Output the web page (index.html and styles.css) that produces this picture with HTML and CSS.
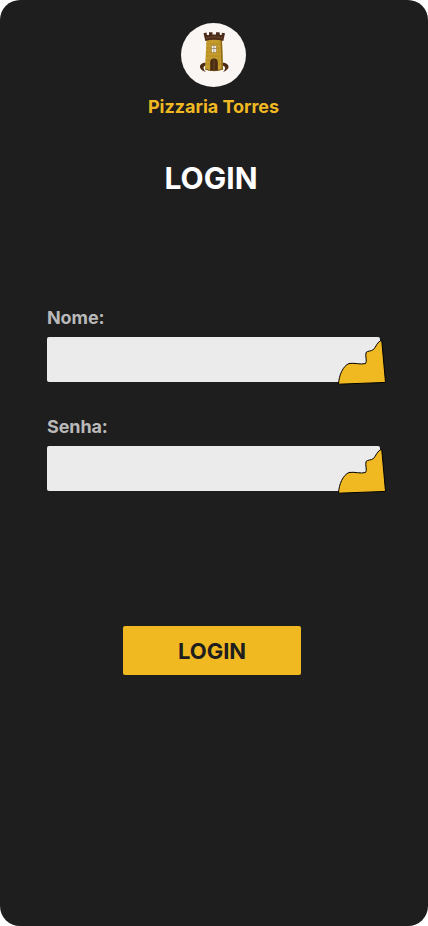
FILE: index.html
```html
<!DOCTYPE html>
<html lang="pt-BR">
<head>
<meta charset="utf-8">
<title>Pizzaria Torres</title>
<link rel="stylesheet" href="styles.css">
</head>
<body>
<main class="screen">
  <header class="brand">
    <div class="logo">
      <svg class="tower" viewBox="0 0 40 48" aria-hidden="true">
        <path d="M11.500 34.500C4 35 4 42 12 44C9 41.500 8.500 38 12 37.500Z" fill="#4b2b13"/>
        <path d="M28.500 34.500C36.500 35.500 36.500 41.500 29 44C32 41 32 38.500 28.500 37.500Z" fill="#4b2b13"/>
        <path d="M12.500 11H28L29 41.500Q20 44.500 11 41.500Z" fill="#c39a2c"/>
        <path d="M12.500 16H28M12.500 20H28M12 24H28.500M12 28H28.500M11.500 32H28.500M11.500 36H28.500" stroke="#a0781c" stroke-width=".6" stroke-dasharray="2 1" fill="none"/>
        <path d="M27.300 13L28.300 41.500" stroke="#896616" stroke-width="1.300"/>
        <path d="M11.200 41Q20 44.500 28.800 41" stroke="#6b4a18" stroke-width=".8" fill="none"/>
        <path d="M9.500 5.200L12.500 4.500L13 7H15V4.200H18.500V6.500H22V4.200H25.500L26 7H27.500L28 4.700L31 5.200L29.300 13Q20 10.500 11.300 13Z" fill="#4b2b19"/>
        <path d="M12 10Q20 7.500 29 10" stroke="#76502d" stroke-width=".8" fill="none"/>
        <path d="M17.500 17.500H22.300V24.500H17.500Z" fill="#f8f5ea" stroke="#8c6b2c" stroke-width=".5"/>
        <path d="M19.900 17.500V24.500M17.500 20.500H22.300" stroke="#756546" stroke-width=".6"/>
        <path d="M16.200 42.400V34.500Q16.200 30.500 20 30.500T23.800 34.500V42.400Z" fill="#492a12"/>
        <path d="M20 31.500V42" stroke="#99743a" stroke-width=".5"/>
      </svg>
    </div>
    <p class="name">Pizzaria Torres</p>
  </header>
  <h1 class="title">LOGIN</h1>
  <form class="form">
    <div class="field">
      <label class="label" for="nome">Nome:</label>
      <div class="control">
        <input class="input" id="nome" type="text">
        <svg class="slice" viewBox="0 0 50 48" aria-hidden="true"><path d="M1.500 47.200C2 38 6 29 12 26.500C17 25.500 24 28 28.500 26.500C30.500 24 28 20 29 15.500C31 13.500 34 14.500 36.500 12.500C39 10 40 5 44.700 3L48.500 45.400Z"/></svg>
      </div>
    </div>
    <div class="field">
      <label class="label" for="senha">Senha:</label>
      <div class="control">
        <input class="input" id="senha" type="password">
        <svg class="slice" viewBox="0 0 50 48" aria-hidden="true"><path d="M1.500 47.200C2 38 6 29 12 26.500C17 25.500 24 28 28.500 26.500C30.500 24 28 20 29 15.500C31 13.500 34 14.500 36.500 12.500C39 10 40 5 44.700 3L48.500 45.400Z"/></svg>
      </div>
    </div>
    <button class="submit" type="button">LOGIN</button>
  </form>
</main>
</body>
</html>
```
FILE: styles.css
```css
* { box-sizing: border-box; }
body { margin: 0; background: #fff; font-family: Inter, sans-serif; }
.screen {
  height: 926px;
  padding-top: 23px;
  border-radius: 20px;
  background: #1e1e1e;
  overflow: hidden;
}
.brand { display: flex; flex-direction: column; align-items: center; padding-right: 1px; }
.logo {
  width: 65px;
  height: 64px;
  padding: 5px 0 0 13px;
  border-radius: 50%;
  background: #faf6f4;
}
.tower { display: block; width: 40px; height: 48px; }
.name {
  margin: 9px 0 0;
  color: #f0b922;
  font-size: 18px;
  font-weight: 700;
  line-height: 22px;
  letter-spacing: -0.03px;
}
.title {
  margin: 42px 6px 0 0;
  color: #fff;
  font-size: 30px;
  font-weight: 700;
  line-height: 36px;
  text-align: center;
}
.form {
  display: flex;
  flex-direction: column;
  gap: 33px;
  margin: 111px 48px 0 47px;
}
.field { display: flex; flex-direction: column; gap: 8px; }
.field + .field { margin-top: 1px; }
.label { color: #b9b9b9; font-size: 18px; font-weight: 700; line-height: 22px; letter-spacing: -0.1px; }
.control { position: relative; height: 45px; }
.input {
  display: block;
  width: 100%;
  height: 45px;
  padding: 0 52px 0 12px;
  border: 0;
  border-radius: 2px;
  background: #ebebeb;
  font: 16px Inter, sans-serif;
}
.slice { position: absolute; top: 0; right: -7px; width: 50px; height: 48px; }
.slice path { fill: #f0b922; stroke: #000; stroke-width: 1; stroke-linejoin: round; }
.submit {
  width: 178px;
  height: 49px;
  margin: 102px 0 0 76px;
  padding: 0;
  border: 0;
  border-radius: 2px;
  background: #f0b922;
  color: #1e1e1e;
  font: 700 22px/26px Inter, sans-serif;
}
```
